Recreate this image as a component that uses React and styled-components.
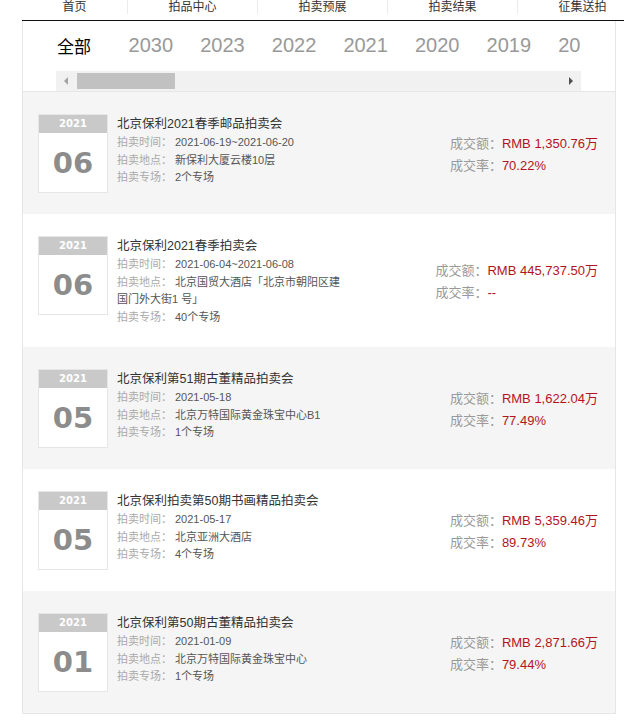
import React from "react";
import styled, { createGlobalStyle } from "styled-components";

const GlobalStyle = createGlobalStyle`
  html, body {
    margin: 0;
    padding: 0;
    background: #fff;
    overflow: hidden;
  }
  body {
    font-family: "Liberation Sans", "Noto Sans CJK SC", sans-serif;
    color: #333;
  }
`;

const navItems = ["首页", "拍品中心", "拍卖预展", "拍卖结果", "征集送拍"];
const years = ["全部", "2030", "2023", "2022", "2021", "2020", "2019", "2018"];

const auctions = [
  {
    year: "2021",
    month: "06",
    title: "北京保利2021春季邮品拍卖会",
    time: "2021-06-19~2021-06-20",
    place: "新保利大厦云楼10层",
    sessions: "2个专场",
    amount: "RMB 1,350.76万",
    rate: "70.22%",
  },
  {
    year: "2021",
    month: "06",
    title: "北京保利2021春季拍卖会",
    time: "2021-06-04~2021-06-08",
    place: "北京国贸大酒店「北京市朝阳区建国门外大街1 号」",
    sessions: "40个专场",
    amount: "RMB 445,737.50万",
    rate: "--",
  },
  {
    year: "2021",
    month: "05",
    title: "北京保利第51期古董精品拍卖会",
    time: "2021-05-18",
    place: "北京万特国际黄金珠宝中心B1",
    sessions: "1个专场",
    amount: "RMB 1,622.04万",
    rate: "77.49%",
  },
  {
    year: "2021",
    month: "05",
    title: "北京保利拍卖第50期书画精品拍卖会",
    time: "2021-05-17",
    place: "北京亚洲大酒店",
    sessions: "4个专场",
    amount: "RMB 5,359.46万",
    rate: "89.73%",
  },
  {
    year: "2021",
    month: "01",
    title: "北京保利第50期古董精品拍卖会",
    time: "2021-01-09",
    place: "北京万特国际黄金珠宝中心",
    sessions: "1个专场",
    amount: "RMB 2,871.66万",
    rate: "79.44%",
  },
];

const Page = styled.div`
  padding-left: 22px;
  width: 720px;
`;

const Nav = styled.div`
  display: flex;
  height: 20px;
  border-bottom: 1px solid #111;
`;

const NavItem = styled.div`
  flex: none;
  width: ${(p) => (p.$first ? "105px" : "130px")};
  height: 14px;
  line-height: 14px;
  text-align: center;
  font-size: 12px;
  color: #333;
  border-left: ${(p) => (p.$first ? "none" : "1px solid #ebebeb")};
  box-sizing: border-box;
`;

const Main = styled.div`
  width: 594px;
  box-sizing: border-box;
  border-left: 1px solid #e6e6e6;
  border-right: 1px solid #e6e6e6;
  border-bottom: 1px solid #e6e6e6;
`;

const YearBar = styled.div`
  padding: 0 34px 0 33px;
  border-bottom: 1px solid #e6e6e6;
`;

const YearViewport = styled.div`
  overflow: hidden;
`;

const YearStrip = styled.div`
  display: flex;
  height: 47px;
  align-items: center;
  padding: 2px 0 0 1px;
  box-sizing: border-box;
  white-space: nowrap;
`;

const YearTab = styled.div`
  flex: none;
  width: 71.6px;
  font-size: ${(p) => (p.$active ? "17px" : "20px")};
  color: ${(p) => (p.$active ? "#000" : "#999")};
`;

const ScrollTrack = styled.div`
  display: flex;
  align-items: center;
  height: 20px;
  margin-top: 3px;
  background: #f1f1f1;
`;

const ScrollButton = styled.div`
  flex: none;
  width: 20px;
  height: 20px;
  display: flex;
  align-items: center;
  justify-content: center;
`;

const Arrow = styled.span`
  width: 0;
  height: 0;
  border-top: 4px solid transparent;
  border-bottom: 4px solid transparent;
  ${(p) =>
    p.$dir === "left"
      ? "border-right: 4px solid #a3a3a3;"
      : "border-left: 4px solid #505050;"}
`;

const Thumb = styled.div`
  flex: none;
  width: 98px;
  height: 16px;
  margin-left: 1px;
  background: #c1c1c1;
`;

const Spacer = styled.div`
  flex: 1;
`;

const Card = styled.div`
  display: flex;
  align-items: flex-start;
  padding: 22px 17px 21px 15px;
  background: ${(p) => (p.$shaded ? "#f5f5f5" : "#fff")};
`;

const DateBox = styled.div`
  flex: none;
  width: 70px;
  height: 79px;
  box-sizing: border-box;
  background: #fff;
  border: 1px solid #e6e6e6;
  display: flex;
  flex-direction: column;
`;

const DateYear = styled.div`
  height: 18px;
  line-height: 18px;
  background: #c9c9c9;
  color: #fff;
  text-align: center;
  font-family: "DejaVu Sans", sans-serif;
  font-weight: bold;
  font-size: 10px;
`;

const DateMonth = styled.div`
  flex: 1;
  display: flex;
  align-items: center;
  justify-content: center;
  font-family: "DejaVu Sans", sans-serif;
  font-weight: bold;
  font-size: 29px;
  color: #8c8c8c;
`;

const Info = styled.div`
  width: 232px;
  margin-left: 9px;
`;

const Title = styled.div`
  font-size: 12.5px;
  line-height: 20px;
  color: #333;
`;

const Detail = styled.div`
  font-size: 11px;
  line-height: 17.5px;
  color: #555;
`;

const Label = styled.span`
  display: inline-block;
  width: 58px;
  color: #aaa;
`;

const Stats = styled.div`
  margin-left: auto;
  align-self: center;
  display: flex;
  flex-direction: column;
  padding-top: 2px;
`;

const StatLine = styled.div`
  font-size: 13px;
  line-height: 22px;
  color: #999;
  white-space: nowrap;
`;

const StatValue = styled.span`
  color: #b3141c;
`;

const AuctionCard = ({ item, shaded }) => (
  <Card $shaded={shaded}>
    <DateBox>
      <DateYear>{item.year}</DateYear>
      <DateMonth>{item.month}</DateMonth>
    </DateBox>
    <Info>
      <Title>{item.title}</Title>
      <Detail>
        <Label>拍卖时间：</Label>
        {item.time}
      </Detail>
      <Detail>
        <Label>拍卖地点：</Label>
        {item.place}
      </Detail>
      <Detail>
        <Label>拍卖专场：</Label>
        {item.sessions}
      </Detail>
    </Info>
    <Stats>
      <StatLine>
        成交额：<StatValue>{item.amount}</StatValue>
      </StatLine>
      <StatLine>
        成交率：<StatValue>{item.rate}</StatValue>
      </StatLine>
    </Stats>
  </Card>
);

export default function App() {
  return (
    <Page>
      <GlobalStyle />
      <Nav>
        {navItems.map((n, i) => (
          <NavItem key={n} $first={i === 0}>
            {n}
          </NavItem>
        ))}
      </Nav>
      <Main>
        <YearBar>
          <YearViewport>
            <YearStrip>
              {years.map((y, i) => (
                <YearTab key={y} $active={i === 0}>
                  {y}
                </YearTab>
              ))}
            </YearStrip>
          </YearViewport>
          <ScrollTrack>
            <ScrollButton>
              <Arrow $dir="left" />
            </ScrollButton>
            <Thumb />
            <Spacer />
            <ScrollButton>
              <Arrow $dir="right" />
            </ScrollButton>
          </ScrollTrack>
        </YearBar>
        {auctions.map((a, i) => (
          <AuctionCard key={a.title} item={a} shaded={i % 2 === 0} />
        ))}
      </Main>
    </Page>
  );
}
